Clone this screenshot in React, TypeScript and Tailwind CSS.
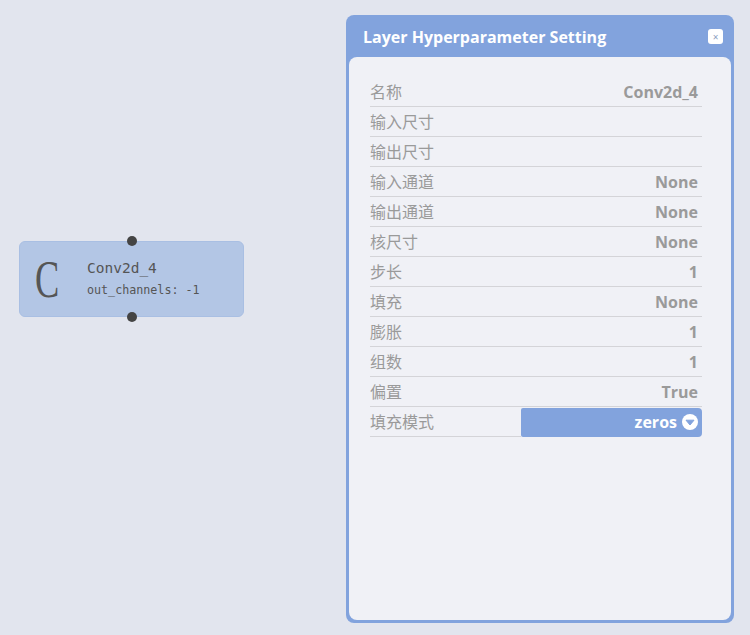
const rows: [string, string][] = [
  ["名称", "Conv2d_4"],
  ["输入尺寸", ""],
  ["输出尺寸", ""],
  ["输入通道", "None"],
  ["输出通道", "None"],
  ["核尺寸", "None"],
  ["步长", "1"],
  ["填充", "None"],
  ["膨胀", "1"],
  ["组数", "1"],
  ["偏置", "True"],
];

function LayerNode() {
  return (
    <div className="relative ml-[19px] mt-[241px] flex h-[76px] w-[225px] items-center rounded-md border border-[#a9bfe3] bg-[#b3c6e5]">
      <span className="absolute left-[107px] top-[-6px] h-[10px] w-[10px] rounded-full bg-[#444]" />
      <span className="absolute bottom-[-6px] left-[107px] h-[10px] w-[10px] rounded-full bg-[#444]" />
      <div className="w-[67px] pl-[8px] pt-[2px]">
        <span className="block origin-left translate-x-[7px] scale-x-[0.7] font-['Liberation_Serif',serif] text-[52px] leading-none text-[#555]">C</span>
      </div>
      <div className="flex flex-col gap-[6px] font-['DejaVu_Sans_Mono',monospace] text-[#555]">
        <span className="text-[14.5px] leading-4">Conv2d_4</span>
        <span className="text-[11.7px] leading-4">out_channels: -1</span>
      </div>
    </div>
  );
}

function SettingPanel() {
  return (
    <div className="ml-auto mr-[16px] mt-[15px] flex h-[608px] w-[388px] flex-col rounded-[8px] bg-[#82a3dd] px-[3px] pb-[3px]">
      <div className="flex h-[42px] items-center justify-between pl-[14px] pr-[8px] pt-[1px]">
        <span className="text-[16px] font-bold text-white">Layer Hyperparameter Setting</span>
        <button className="flex h-[15px] w-[15px] items-center justify-center rounded-[3px] bg-white text-[10px] leading-none text-[#8a9dc0]">
          ×
        </button>
      </div>
      <div className="flex-1 rounded-[8px] bg-[#f0f1f6] pl-[21px] pr-[29px] pt-[20px]">
        {rows.map(([k, v]) => (
          <div key={k} className="flex h-[30px] items-center justify-between border-b border-[#d4d4d8] pr-[4px] text-[16px] text-[#9a9a9a]">
            <span>{k}</span>
            <span className="font-bold">{v}</span>
          </div>
        ))}
        <div className="flex h-[30px] items-center">
          <span className="flex h-[30px] w-[151px] items-center border-b border-[#d4d4d8] text-[16px] text-[#9a9a9a]">填充模式</span>
          <div className="flex h-[29px] flex-1 items-center justify-end gap-[5px] rounded-r-[4px] rounded-l-[2px] bg-[#82a3dd] pr-[4px] text-[16px] font-bold text-white">
            zeros
            <svg viewBox="0 0 16 16" className="h-[16px] w-[16px]">
              <circle cx="8" cy="8" r="8" fill="white" />
              <path d="M4 6.2 L12 6.2 L8 11 Z" fill="#82a3dd" strokeLinejoin="round" stroke="#82a3dd" strokeWidth="1" />
            </svg>
          </div>
        </div>
      </div>
    </div>
  );
}

export default function App() {
  return (
    <div className="flex h-[635px] w-[750px] items-start bg-[#e2e5ee] font-['Open_Sans','Noto_Sans_CJK_SC',sans-serif]">
      <LayerNode />
      <SettingPanel />
    </div>
  );
}
